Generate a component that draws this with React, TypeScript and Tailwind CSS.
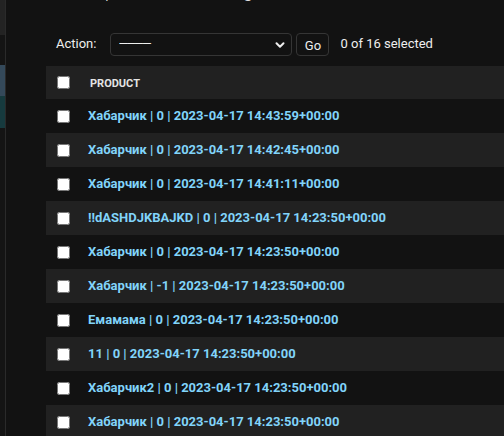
const rows = [
  "Хабарчик | 0 | 2023-04-17 14:43:59+00:00",
  "Хабарчик | 0 | 2023-04-17 14:42:45+00:00",
  "Хабарчик | 0 | 2023-04-17 14:41:11+00:00",
  "!!dASHDJKBAJKD | 0 | 2023-04-17 14:23:50+00:00",
  "Хабарчик | 0 | 2023-04-17 14:23:50+00:00",
  "Хабарчик | -1 | 2023-04-17 14:23:50+00:00",
  "Емамама | 0 | 2023-04-17 14:23:50+00:00",
  "11 | 0 | 2023-04-17 14:23:50+00:00",
  "Хабарчик2 | 0 | 2023-04-17 14:23:50+00:00",
  "Хабарчик | 0 | 2023-04-17 14:23:50+00:00",
];

export default function App() {
  return (
    <div
      className="flex h-[436px] w-[504px] overflow-hidden bg-[#121212] text-[13px] text-[#eeeeee]"
      style={{ fontFamily: "Roboto, 'Liberation Sans', sans-serif" }}
    >
      {/* collapsed sidebar */}
      <div className="flex w-[6px] shrink-0 flex-col border-r border-[#2a2a2a]">
        <div className="h-[35px] bg-[#232323]" />
        <div className="h-[30px] bg-[#141414]" />
        <div className="h-[31px] bg-[#34495a]" />
        <div className="h-[32px] bg-[#163a3e]" />
        <div className="flex-1 bg-[#141414]" />
      </div>

      <main className="min-w-0 flex-1 pl-[40px]">
        <h1 className="-mt-[20px] h-[20px] text-[20px] leading-[20px] font-light text-[#dddddd]">
          Select product to change
        </h1>

        <div className="mt-[22px] flex h-[44px] items-center pl-[10px]">
          <label className="mr-[14px]">Action:</label>
          <div className="relative h-[23px] w-[182px]">
            <select
              className="h-full w-full appearance-none rounded-[4px] border border-[#353535] bg-[#121212] pl-[8px] text-[13px] text-[#eeeeee] outline-none"
              style={{ fontFamily: "'DejaVu Sans', sans-serif" }}
            >
              <option>────</option>
            </select>
            <svg
              className="pointer-events-none absolute right-[7px] top-[7px]"
              width="10"
              height="10"
              viewBox="0 0 10 10"
              fill="none"
              stroke="#eeeeee"
              strokeWidth="2"
              strokeLinecap="round"
              strokeLinejoin="round"
            >
              <path d="M1.5 3.2 5 6.7 8.5 3.2" />
            </svg>
          </div>
          <button className="ml-[4px] h-[23px] w-[33px] rounded-[4px] border border-[#353535] bg-[#121212] pt-[2px] text-[13px] text-[#eeeeee]">
            Go
          </button>
          <span className="ml-[11px]">0 of 16 selected</span>
        </div>

        <div className="w-[470px]">
          <div className="flex h-[33px] items-center bg-[#212121] pl-[11px]">
            <input type="checkbox" className="m-0 h-[13px] w-[13px]" />
            <span className="ml-[20px] mt-[3px] text-[11px] font-bold uppercase text-[#e4e4e4]">
              Product
            </span>
          </div>
          {rows.map((row, i) => (
            <div
              key={i}
              className={`flex h-[34px] items-center pl-[11px] ${
                i % 2 === 1 ? "bg-[#212121]" : "bg-[#121212]"
              }`}
            >
              <input type="checkbox" className="m-0 h-[13px] w-[13px]" />
              <a className="ml-[18px] whitespace-nowrap font-bold text-[#81d4fa]">
                {row}
              </a>
            </div>
          ))}
        </div>
      </main>
    </div>
  );
}
